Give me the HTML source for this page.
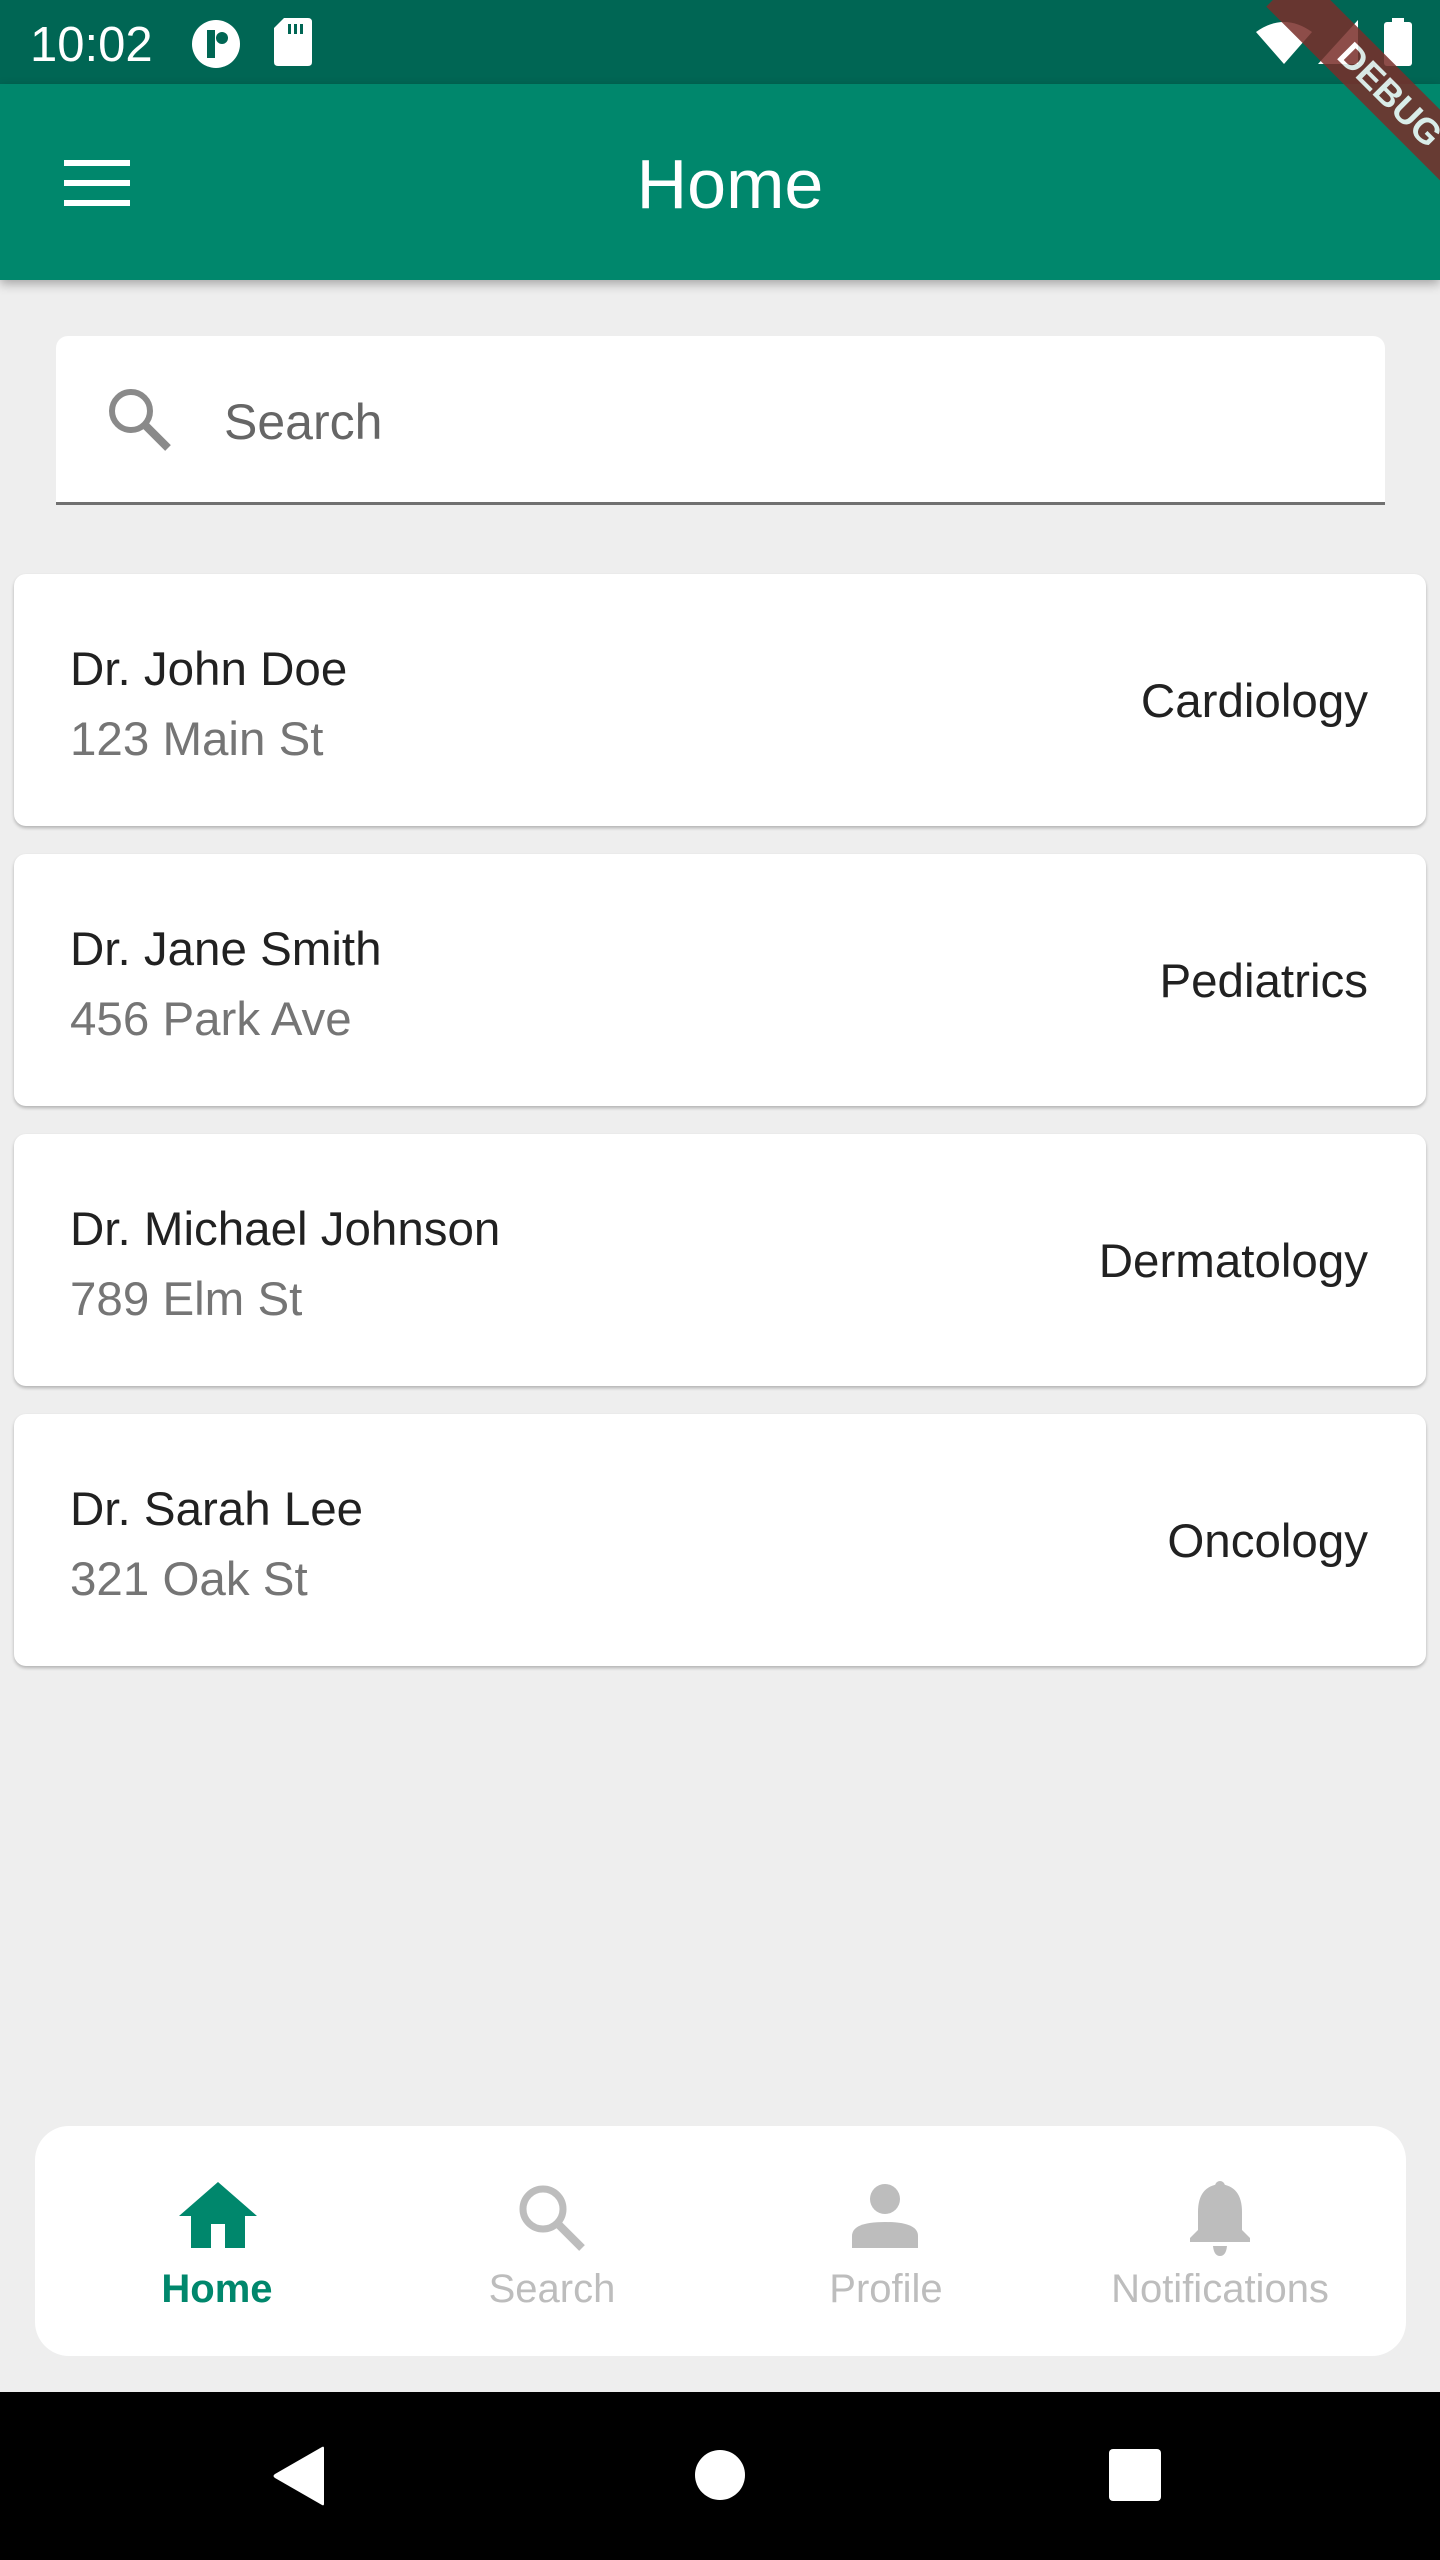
<!DOCTYPE html>
<html><head><meta charset="utf-8"><style>
*{margin:0;padding:0;box-sizing:border-box}
body{width:1440px;height:2560px;background:#eeeeee;position:relative;overflow:hidden;font-family:"Liberation Sans",Roboto,sans-serif}
.abs{position:absolute}
.status{left:0;top:0;width:1440px;height:84px;background:#006654}
.appbar{left:0;top:84px;width:1440px;height:196px;background:#00876c;box-shadow:0 4px 10px rgba(0,0,0,.3)}
.card{left:14px;width:1412px;height:252px;background:#fff;border-radius:12px;box-shadow:0 2px 3px rgba(0,0,0,.25)}
.t1{position:absolute;left:56px;font-size:47.5px;color:#212121}
.t2{position:absolute;left:56px;font-size:47.5px;color:#757575}
.tr{position:absolute;right:58px;font-size:47.5px;color:#212121}
.lbl{position:absolute;top:2267px;font-size:40px;color:#bdbdbd;width:340px;text-align:center}
</style></head><body>
<div class="abs status"></div>
<div class="abs" style="left:30px;top:17px;font-size:49px;color:#fff">10:02</div>
<svg class="abs" style="left:190px;top:18px" width="52" height="52" viewBox="0 0 52 52"><circle cx="26" cy="26" r="24" fill="#fff"/><rect x="17" y="12" width="8" height="28" fill="#006654"/><circle cx="32" cy="20" r="6" fill="#006654"/></svg>
<svg class="abs" style="left:274px;top:18px" width="38" height="48" viewBox="0 0 38 48"><path d="M10 0H34Q38 0 38 4V44Q38 48 34 48H4Q0 48 0 44V10Z" fill="#fff"/><rect x="14" y="6" width="3" height="10" fill="#006654"/><rect x="20" y="6" width="3" height="10" fill="#006654"/><rect x="26" y="6" width="3" height="10" fill="#006654"/></svg>
<svg class="abs" style="left:1256px;top:20px" width="56" height="44" viewBox="0 0 56 44"><path d="M0 12Q28 -8 56 12L28 44Z" fill="#fff"/></svg>
<svg class="abs" style="left:1318px;top:20px" width="40" height="44" viewBox="0 0 40 44"><path d="M40 0V44H0Z" fill="#fff"/></svg>
<svg class="abs" style="left:1384px;top:18px" width="28" height="48" viewBox="0 0 28 48"><rect x="8" y="0" width="12" height="6" fill="#fff"/><rect x="0" y="4" width="28" height="44" rx="3" fill="#fff"/></svg>
<div class="abs appbar"></div>
<svg class="abs" style="left:64px;top:160px" width="66" height="46" viewBox="0 0 66 46"><rect y="0" width="66" height="6" fill="#fff"/><rect y="20" width="66" height="6" fill="#fff"/><rect y="40" width="66" height="6" fill="#fff"/></svg>
<div class="abs" style="left:0;width:1460px;top:144px;text-align:center;font-size:70px;color:#fff">Home</div>
<div class="abs" style="left:1200px;top:0;width:240px;height:240px;overflow:hidden"><div style="position:absolute;left:40px;top:70px;width:300px;height:50px;background:#7a2e2a;transform:rotate(45deg);color:#fff;font-weight:bold;font-size:36px;text-align:center;line-height:50px;opacity:.85">DEBUG</div></div>
<div class="abs" style="left:56px;top:336px;width:1329px;height:169px;background:#fff;border-radius:12px 12px 0 0;border-bottom:3px solid #707070"></div>
<svg class="abs" style="left:106px;top:386px" width="66" height="66" viewBox="0 0 66 66"><circle cx="25" cy="25" r="19" fill="none" stroke="#8a8a8a" stroke-width="6"/><path d="M38 38L62 62" stroke="#8a8a8a" stroke-width="8"/></svg>
<div class="abs" style="left:224px;top:393px;font-size:50px;color:#666">Search</div>

<div class="abs card" style="top:574px"><div class="t1" style="top:68px">Dr. John Doe</div><div class="t2" style="top:138px">123 Main St</div><div class="tr" style="top:100px">Cardiology</div></div>
<div class="abs card" style="top:854px"><div class="t1" style="top:68px">Dr. Jane Smith</div><div class="t2" style="top:138px">456 Park Ave</div><div class="tr" style="top:100px">Pediatrics</div></div>
<div class="abs card" style="top:1134px"><div class="t1" style="top:68px">Dr. Michael Johnson</div><div class="t2" style="top:138px">789 Elm St</div><div class="tr" style="top:100px">Dermatology</div></div>
<div class="abs card" style="top:1414px"><div class="t1" style="top:68px">Dr. Sarah Lee</div><div class="t2" style="top:138px">321 Oak St</div><div class="tr" style="top:100px">Oncology</div></div>

<div class="abs" style="left:35px;top:2126px;width:1371px;height:230px;background:#fff;border-radius:34px"></div>
<svg class="abs" style="left:179px;top:2182px" width="78" height="66" viewBox="0 0 78 66"><path d="M39 0L78 34H66V66H46V42H32V66H12V34H0Z" fill="#00876c"/></svg>
<div class="lbl" style="left:47px;color:#00876c;font-weight:bold">Home</div>
<svg class="abs" style="left:516px;top:2182px" width="70" height="70" viewBox="0 0 70 70"><circle cx="27" cy="27" r="20" fill="none" stroke="#bdbdbd" stroke-width="7"/><path d="M41 41L66 66" stroke="#bdbdbd" stroke-width="8"/></svg>
<div class="lbl" style="left:382px">Search</div>
<svg class="abs" style="left:852px;top:2184px" width="66" height="64" viewBox="0 0 66 64"><circle cx="33" cy="15" r="15" fill="#bdbdbd"/><path d="M0 64V52Q0 38 33 38Q66 38 66 52V64Z" fill="#bdbdbd"/></svg>
<div class="lbl" style="left:716px">Profile</div>
<svg class="abs" style="left:1188px;top:2180px" width="64" height="76" viewBox="0 0 64 76"><circle cx="32" cy="6" r="5" fill="#bdbdbd"/><path d="M32 4Q10 6 10 32V50L2 58V62H62V58L54 50V32Q54 6 32 4Z" fill="#bdbdbd"/><path d="M25 66H39Q38 76 32 76Q26 76 25 66Z" fill="#bdbdbd"/></svg>
<div class="lbl" style="left:1050px">Notifications</div>

<div class="abs" style="left:0;top:2392px;width:1440px;height:168px;background:#000"></div>
<svg class="abs" style="left:272px;top:2446px" width="54" height="60" viewBox="0 0 54 60"><path d="M52 2V58Q52 60 50 59L3 32Q0 30 3 28L50 1Q52 0 52 2Z" fill="#fff"/></svg>
<div class="abs" style="left:695px;top:2450px;width:50px;height:50px;border-radius:50%;background:#fff"></div>
<div class="abs" style="left:1109px;top:2449px;width:52px;height:52px;border-radius:4px;background:#fff"></div>
</body></html>
